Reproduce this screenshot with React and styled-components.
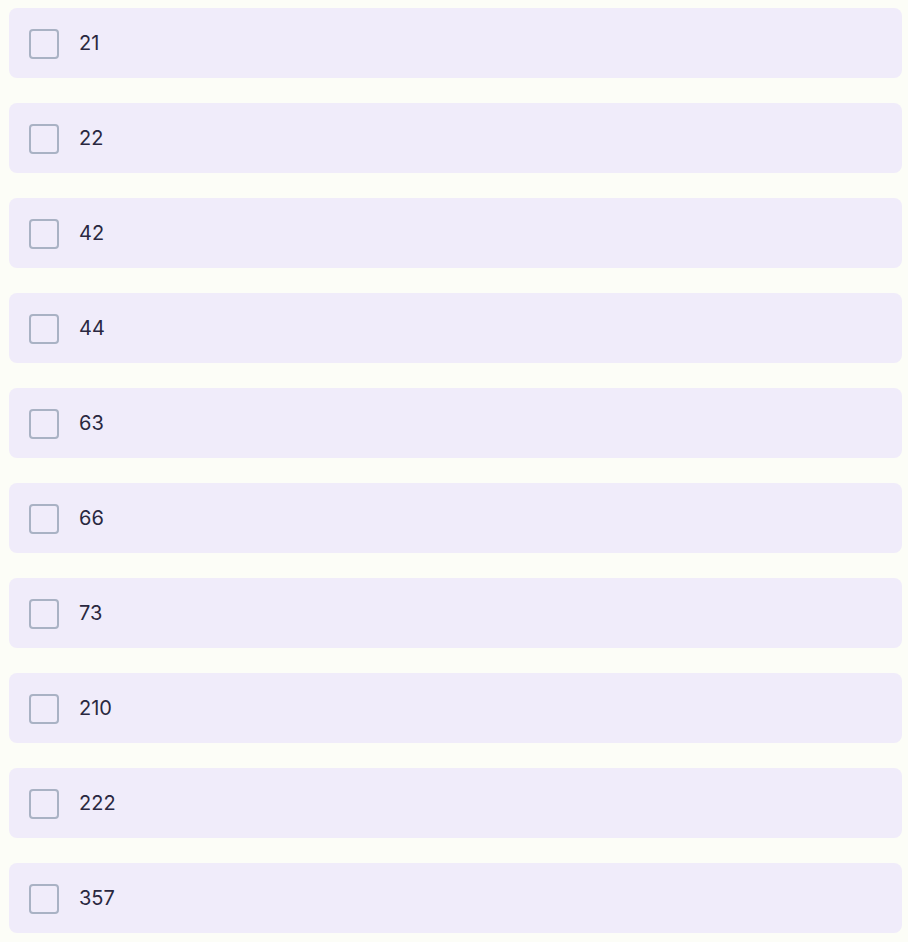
import React from 'react'
import styled, { createGlobalStyle } from 'styled-components'

const items = [21, 22, 42, 44, 63, 66, 73, 210, 222, 357]

const GlobalStyle = createGlobalStyle`
  html, body {
    margin: 0;
    background: #fcfdf7;
  }
  body {
    padding: 8px 6px 8px 9px;
    font-family: Inter, "Noto Sans", sans-serif;
  }
`

const List = styled.ul`
  list-style: none;
  margin: 0;
  padding: 0;
  display: flex;
  flex-direction: column;
  gap: 25px;
`

const Row = styled.li`
  display: flex;
  align-items: center;
  gap: 20px;
  height: 70px;
  padding: 0 20px;
  box-sizing: border-box;
  background: #f0ecfa;
  border-radius: 8px;
`

const Box = styled.span`
  width: 30px;
  height: 30px;
  margin-top: 2px;
  box-sizing: border-box;
  border: 2px solid #a9b2c4;
  border-radius: 4px;
  flex-shrink: 0;
`

const Label = styled.span`
  font-size: 20px;
  font-weight: 400;
  color: #2a2840;
  line-height: 1;
`

export default function App() {
  return (
    <>
      <GlobalStyle />
      <List>
        {items.map(n => (
          <Row key={n}>
            <Box />
            <Label>{n}</Label>
          </Row>
        ))}
      </List>
    </>
  )
}
